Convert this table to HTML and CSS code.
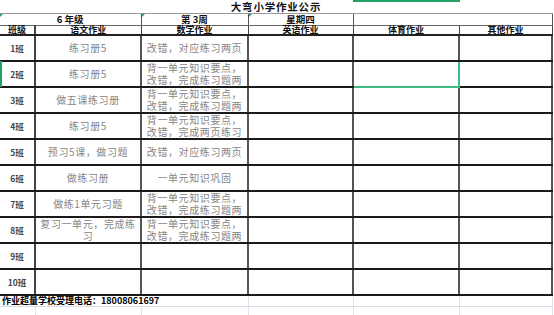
FILE: index.html
```html
<!DOCTYPE html>
<html lang="zh">
<head>
<meta charset="utf-8">
<title>大弯小学作业公示</title>
<link rel="stylesheet" href="styles.css">
</head>
<body>
<div class="sheet">
  <div class="colsel"></div>
  <div class="rowsel"></div>
  <table class="grid">
    <colgroup>
      <col class="c1"><col class="c2"><col class="c3"><col class="c4"><col class="c5"><col class="c6">
    </colgroup>
    <tr class="title"><td colspan="6">大弯小学作业公示</td></tr>
    <tr class="h1">
      <td colspan="2" class="mark">6 年级</td>
      <td class="mark">第 3周</td>
      <td class="mark">星期四</td>
      <td colspan="2"></td>
    </tr>
    <tr class="h2">
      <td>班级</td><td>语文作业</td><td>数学作业</td><td>英语作业</td><td>体育作业</td><td>其他作业</td>
    </tr>
    <tr class="row"><td class="cls">1班</td><td>练习册5</td><td>改错，对应练习两页</td><td></td><td></td><td></td></tr>
    <tr class="row"><td class="cls">2班</td><td>练习册5</td><td>背一单元知识要点，<br>改错，完成练习题两</td><td></td><td class="sel"></td><td></td></tr>
    <tr class="row"><td class="cls">3班</td><td>做五课练习册</td><td>背一单元知识要点，<br>改错，完成练习题两</td><td></td><td></td><td></td></tr>
    <tr class="row"><td class="cls">4班</td><td>练习册5</td><td>背一单元知识要点，<br>改错，完成两页练习</td><td></td><td></td><td></td></tr>
    <tr class="row"><td class="cls">5班</td><td>预习5课，做习题</td><td>改错，对应练习两页</td><td></td><td></td><td></td></tr>
    <tr class="row"><td class="cls">6班</td><td>做练习册</td><td>一单元知识巩固</td><td></td><td></td><td></td></tr>
    <tr class="row"><td class="cls">7班</td><td>做练1单元习题</td><td>背一单元知识要点，<br>改错，完成练习题两</td><td></td><td></td><td></td></tr>
    <tr class="row"><td class="cls">8班</td><td>复习一单元，完成练<br>习</td><td>背一单元知识要点，<br>改错，完成练习题两</td><td></td><td></td><td></td></tr>
    <tr class="row"><td class="cls">9班</td><td></td><td></td><td></td><td></td><td></td></tr>
    <tr class="row"><td class="cls">10班</td><td></td><td></td><td></td><td></td><td></td></tr>
    <tr class="foot"><td colspan="3" class="note">作业超量学校受理电话：18008061697</td><td></td><td></td><td></td></tr>
    <tr class="blank"><td></td><td></td><td></td><td></td><td></td><td></td></tr>
  </table>
</div>
</body>
</html>
```
FILE: styles.css
```css
html, body {
  margin: 0;
  padding: 0;
  background: #ffffff;
}
body {
  width: 554px;
  height: 315px;
  overflow: hidden;
  font-family: "Noto Sans CJK SC", "Noto Sans", sans-serif;
}
.sheet {
  position: relative;
  width: 554px;
  height: 315px;
  overflow: hidden;
}
.colsel {
  position: absolute;
  left: 353px;
  top: 0;
  width: 107px;
  height: 2px;
  background: #21a366;
  z-index: 2;
}
.rowsel {
  position: absolute;
  left: 0;
  top: 61px;
  width: 2px;
  height: 26px;
  background: #21a366;
  z-index: 2;
}
.grid {
  border-collapse: collapse;
  table-layout: fixed;
  width: 553px;
}
.c1 { width: 35px; }
.c2 { width: 106px; }
.c3 { width: 107px; }
.c4 { width: 105px; }
.c5 { width: 106px; }
.c6 { width: 93px; }
.grid td {
  padding: 0;
  text-align: center;
  vertical-align: middle;
  overflow: hidden;
  white-space: nowrap;
}
.title td {
  height: 13px;
  font-size: 10.5px;
  line-height: 13px;
  font-weight: bold;
  color: #111;
  border-bottom: 1px solid #9a9a9a;
  letter-spacing: 0.8px;
}
.h1 td {
  height: 11px;
  font-size: 9.5px;
  line-height: 11px;
  font-weight: bold;
  color: #111;
  border-right: 1px solid #555;
  border-bottom: 1px solid #666;
  overflow: visible;
}
.mark {
  position: relative;
}
.mark::before {
  content: "";
  position: absolute;
  left: 0;
  top: 0;
  border-top: 3px solid #21a366;
  border-right: 3px solid transparent;
}
.h2 td {
  height: 8px;
  font-size: 9px;
  line-height: 8px;
  font-weight: bold;
  color: #111;
  border-right: 1px solid #444;
  border-bottom: 2px solid #222;
  overflow: visible;
}
.h2 td:first-child, .row td:first-child {
  border-right: 2px solid #444;
}
.row td {
  height: 24px;
  font-size: 10px;
  line-height: 12px;
  color: #868686;
  letter-spacing: 0.6px;
  border-right: 2px solid #555;
  border-bottom: 2px solid #1a1a1a;
}
.row td.cls {
  font-size: 8.5px;
  font-weight: bold;
  color: #444;
  letter-spacing: 0;
}
.row td.sel {
  border: 2px solid #3dbb83;
}
.foot td {
  height: 10px;
  border-right: 1px solid #e0e3ec;
  border-bottom: 1px solid #d8dcea;
}
.foot td.note {
  text-align: left;
  font-size: 9px;
  line-height: 10px;
  font-weight: bold;
  color: #000;
  padding-left: 2px;
  overflow: visible;
}
.blank td {
  height: 10px;
  border-right: 1px solid #e0e3ec;
  border-bottom: 1px solid #d8dcea;
}
```
